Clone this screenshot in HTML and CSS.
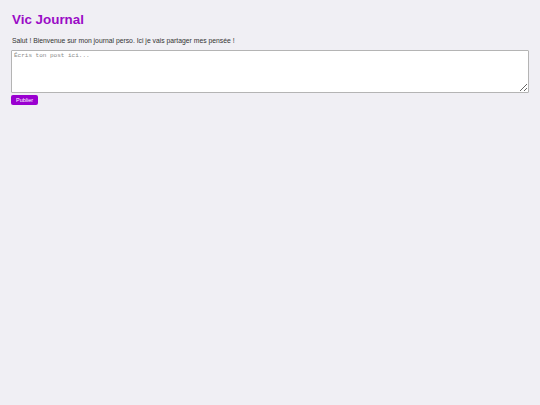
FILE: index.html
```html
<!DOCTYPE html>
<html lang="fr">
<head>
<meta charset="utf-8">
<title>Vic Journal</title>
<link rel="stylesheet" href="styles.css">
</head>
<body>
<main class="page">
  <h1 class="title">Vic Journal</h1>
  <p class="intro">Salut ! Bienvenue sur mon journal perso. Ici je vais partager mes pensée !</p>
  <form class="post-form">
    <textarea class="post-input" placeholder="Écris ton post ici..."></textarea>
    <button type="button" class="post-btn">Publier</button>
  </form>
</main>
</body>
</html>
```
FILE: styles.css
```css
html, body {
  margin: 0;
  padding: 0;
  background: #f0eff4;
}
.page {
  padding: 12px 12px 12px 11px;
  font-family: "Liberation Sans", Arial, sans-serif;
}
.title {
  margin: 0 0 0 1px;
  font-size: 13.4px;
  line-height: 16px;
  font-weight: bold;
  color: #9a0bc6;
}
.intro {
  margin: 9px 0 0 1px;
  font-size: 6.8px;
  line-height: 8px;
  color: #333;
}
.post-form {
  display: flex;
  flex-direction: column;
  align-items: flex-start;
  gap: 2px;
  margin-top: 5px;
}
.post-input {
  box-sizing: border-box;
  width: 518px;
  height: 43px;
  margin: 0;
  padding: 1px 2px;
  border: 1px solid #b4b4b4;
  border-radius: 1px;
  background: #fff;
  font-family: "Liberation Mono", monospace;
  font-size: 6px;
  resize: vertical;
}
.post-input::placeholder {
  color: #8a8a8a;
}
.post-btn {
  height: 10px;
  padding: 0 5px;
  border: none;
  border-radius: 2px;
  background: #9a00d0;
  color: #fff;
  font-family: "Liberation Sans", Arial, sans-serif;
  font-size: 5.5px;
  line-height: 10px;
}
```
